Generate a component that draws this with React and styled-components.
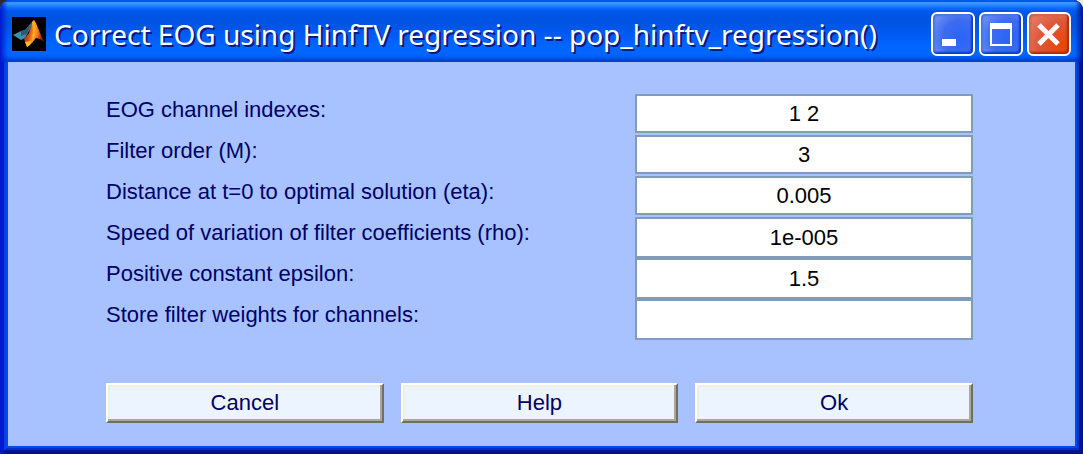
import React from "react";
import styled, { createGlobalStyle } from "styled-components";

const GlobalStyle = createGlobalStyle`
  * { box-sizing: border-box; }
  body {
    margin: 0;
    background: linear-gradient(90deg, #2b2d2b 50%, #ece9d8 50%);
    font-family: "Liberation Sans", Arial, sans-serif;
    font-variant-ligatures: none;
  }
`;

const Window = styled.main`
  border-radius: 10px 10px 0 0;
  overflow: hidden;
  background: #0048f0;
  box-shadow: inset 4px 0 #0019cf, inset -4px 0 #00138c, inset 0 -4px #00138c,
    inset 6px 0 #0a3ee0, inset -6px 0 #0030c8, inset 0 -6px #0030c8;
`;

const TitleBar = styled.header`
  height: 62px;
  padding: 6px 12px 0;
  display: flex;
  align-items: center;
  gap: 8px;
  color: #fff;
  background:
    linear-gradient(90deg, #0019cf, rgba(0, 60, 220, 0) 8px, rgba(0, 60, 220, 0) calc(100% - 8px), #00138c),
    linear-gradient(
      180deg,
      #0058e6 0, #0058e6 2px, #3a93ff 2px, #3a93ff 4px, #2888ff 5px, #0a6cff 8px,
      #0058ea 11px, #0053e0 18px, #0055e5 26px, #005cf5 36px, #0066ff 46px,
      #0066ff 54px, #005bff 57px, #0048dc 59px, #0040cc 62px
    );
`;

const Title = styled.h1`
  flex: 1;
  min-width: 0;
  margin: 0;
  font: 400 28px/38px "Noto Sans", sans-serif;
  white-space: nowrap;
  text-shadow: 2px 2px 0 #0a1883;
`;

const Controls = styled.div`
  display: flex;
  gap: 4px;
`;

const ControlButton = styled.button`
  width: 44px;
  height: 44px;
  padding: 0;
  display: grid;
  place-items: center;
  border: 2px solid #fff;
  border-radius: 6px;
  background: ${(p) =>
    p.$danger
      ? "radial-gradient(circle at 85% 80%, #e8480c 10%, #de5535 50%, #e9907c 110%)"
      : "radial-gradient(circle at 70% 60%, #2b66f4 10%, #3f6cf0 50%, #8ba8f8 110%)"};
  box-shadow: inset -2px -2px 2px ${(p) => (p.$danger ? "#a82c08" : "#0c3cc0")},
    inset 2px 2px 2px ${(p) => (p.$danger ? "#d0624c" : "#4a72e4")};
`;

const Dialog = styled.form`
  margin: 0 8px 8px;
  padding: 32px 102px 23px 98px;
  background: #a8c2ff;
`;

const FieldRow = styled.div`
  min-height: 41px;
  display: grid;
  grid-template-columns: 529fr 338fr;
  align-items: start;
`;

const Label = styled.label`
  font-size: 22px;
  line-height: 32px;
  color: #000066;
  white-space: nowrap;
`;

const Field = styled.input`
  width: 100%;
  height: ${(p) => (p.$joined ? 41 : 39)}px;
  padding: 0 4px;
  border: 2px solid #7f9db9;
  border-radius: 0;
  background: #fff;
  color: #000;
  font: 22px "Liberation Sans", Arial, sans-serif;
  text-align: center;
`;

const Actions = styled.div`
  margin-top: 43px;
  display: grid;
  grid-template-columns: repeat(3, 1fr);
  gap: 17px;
`;

const ActionButton = styled.button`
  height: 40px;
  padding: 0;
  border: 2px solid;
  border-color: #fff #716f64 #716f64 #fff;
  border-radius: 0;
  background: #ecf5ff;
  box-shadow: inset -2px -2px #aca899, inset 2px 2px #f1efe2;
  color: #000066;
  font: 22px "Liberation Sans", Arial, sans-serif;
`;

const fields = [
  { id: "channels", label: "EOG channel indexes:", value: "1 2" },
  { id: "order", label: "Filter order (M):", value: "3" },
  { id: "eta", label: "Distance at t=0 to optimal solution (eta):", value: "0.005" },
  { id: "rho", label: "Speed of variation of filter coefficients (rho):", value: "1e-005", joined: true },
  { id: "epsilon", label: "Positive constant epsilon:", value: "1.5", joined: true },
  { id: "store", label: "Store filter weights for channels:", value: "", joined: true },
];

function MatlabIcon() {
  return (
    <svg width="34" height="34" viewBox="0 0 34 34" aria-hidden="true">
      <defs>
        <linearGradient id="peak" x1="0" x2="1" y1="0" y2="0.3">
          <stop offset="0" stopColor="#7c1c10" />
          <stop offset="0.4" stopColor="#d8541c" />
          <stop offset="0.6" stopColor="#ffa020" />
          <stop offset="0.78" stopColor="#f07020" />
          <stop offset="1" stopColor="#8c1c10" />
        </linearGradient>
      </defs>
      <rect width="34" height="34" fill="#000" />
      <path d="M1 18 L9 14 L13 13 L20 5 L18 12 L13 21 L9 23 Z" fill="#3c91aa" />
      <path d="M9 14 L13 13 L19 7 L15 17 L9 19 Z" fill="#295c70" />
      <path d="M12 22 L17 16 L20 5 L22 3 L24 6 L28 16 L32 25 L28 22 L24 21 L19 27 L15 30 Z" fill="url(#peak)" />
      <path d="M20 5 L22 3 L23 6 L23 18 L20 24 L21 14 Z" fill="#ffad22" />
      <path d="M13 25 L19 24 L18 28 L15 30 Z" fill="#ffc022" />
    </svg>
  );
}

const glyphs = {
  Minimize: <path d="M9 25h14v7H9z" fill="#fff" />,
  Maximize: <path d="M9 9h22v23H9zM11 15v15h18V15z" fill="#fff" fillRule="evenodd" />,
  Close: <path d="M10 11L29 30M29 11L10 30" stroke="#fff" strokeWidth="5" />,
};

export default function App() {
  return (
    <>
      <GlobalStyle />
      <Window>
        <TitleBar>
          <MatlabIcon />
          <Title>Correct EOG using HinfTV regression -- pop_hinftv_regression()</Title>
          <Controls>
            {Object.entries(glyphs).map(([name, glyph]) => (
              <ControlButton key={name} type="button" aria-label={name} $danger={name === "Close"}>
                <svg width="40" height="40" viewBox="0 0 40 40" aria-hidden="true">{glyph}</svg>
              </ControlButton>
            ))}
          </Controls>
        </TitleBar>
        <Dialog onSubmit={(e) => e.preventDefault()}>
          {fields.map((f) => (
            <FieldRow key={f.id}>
              <Label htmlFor={f.id}>{f.label}</Label>
              <Field id={f.id} type="text" defaultValue={f.value} $joined={f.joined} />
            </FieldRow>
          ))}
          <Actions>
            <ActionButton type="button">Cancel</ActionButton>
            <ActionButton type="button">Help</ActionButton>
            <ActionButton type="submit">Ok</ActionButton>
          </Actions>
        </Dialog>
      </Window>
    </>
  );
}
